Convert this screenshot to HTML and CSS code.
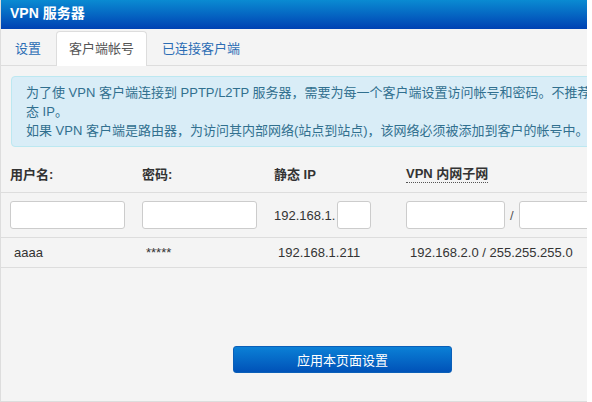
FILE: index.html
```html
<!DOCTYPE html>
<html lang="zh-CN">
<head>
    <meta charset="UTF-8">
    <title>VPN 服务器</title>
    <link rel="stylesheet" href="styles.css">
</head>
<body>
<section class="panel">
    <div class="inner">
        <div class="hd">VPN 服务器</div>
        <ul class="tabs">
            <li><a href="javascript:;">设置</a></li>
            <li class="active"><a href="javascript:;">客户端帐号</a></li>
            <li><a href="javascript:;">已连接客户端</a></li>
        </ul>
        <div class="alert">
            为了使 VPN 客户端连接到 PPTP/L2TP 服务器，需要为每一个客户端设置访问帐号和密码。不推荐使用静<br>
            态 IP。<br>
            如果 VPN 客户端是路由器，为访问其内部网络(站点到站点)，该网络必须被添加到客户的帐号中。
        </div>
        <div class="grid">
            <div class="row head">
                <div class="cell">用户名:</div>
                <div class="cell">密码:</div>
                <div class="cell">静态 IP</div>
                <div class="cell"><span class="tip">VPN 内网子网</span></div>
            </div>
            <div class="row form">
                <div class="cell"><input type="text" class="ipt"></div>
                <div class="cell"><input type="password" class="ipt"></div>
                <div class="cell">192.168.1.<input type="text" class="ipt small"></div>
                <div class="cell"><input type="text" class="ipt net"><span class="sep">/</span><input type="text" class="ipt net"></div>
            </div>
            <div class="row data">
                <div class="cell">aaaa</div>
                <div class="cell">*****</div>
                <div class="cell">192.168.1.211</div>
                <div class="cell">192.168.2.0 / 255.255.255.0</div>
            </div>
        </div>
        <div class="actions">
            <button class="btn">应用本页面设置</button>
        </div>
    </div>
</section>
</body>
</html>
```

FILE: styles.css
```css
html,body{ height:100%; }
body,ul{ margin:0; padding:0; }
body{
    background:#fff;
    font-family:"Liberation Sans","Noto Sans CJK SC",sans-serif;
    font-size:13px;
    color:#333;
}
.panel{
    width:587px;
    height:402px;
    box-sizing:border-box;
    border-left:1px solid #ddd;
    border-bottom:1px solid #ddd;
    background:#f4f4f4;
    overflow:hidden;
}
.panel .inner{ width:685px; margin-left:-1px; }
.hd{
    height:29px;
    line-height:27px;
    padding-left:10px;
    background:linear-gradient(#0a8bd2,#0041b3);
    color:#fff;
    font-size:14px;
    font-weight:bold;
}
.tabs{
    list-style:none;
    display:flex;
    align-items:flex-start;
    height:34px;
    padding:2px 0 0 2px;
    border-bottom:1px solid #ddd;
}
.tabs li{
    height:33px;
    margin-right:2px;
    border:1px solid transparent;
    border-bottom:none;
    border-radius:4px 4px 0 0;
}
.tabs li a{
    display:block;
    padding:0 12px;
    line-height:33px;
    color:#2c6db4;
    text-decoration:none;
}
.tabs li.active{
    height:34px;
    background:#fff;
    border-color:#ddd;
}
.tabs li.active a{ color:#555; }
.alert{
    margin:10px 11px 0 11px;
    padding:6px 14px;
    border:1px solid #bce8f1;
    border-radius:4px;
    background:#d9edf7;
    color:#31708f;
    line-height:19px;
    white-space:nowrap;
}
.grid{ margin-top:10px; }
.grid .row{
    display:grid;
    grid-template-columns:132px 132px 132px 1fr;
    padding-left:2px;
    border-bottom:1px solid #ddd;
    line-height:19px;
}
.grid .cell{
    display:flex;
    align-items:center;
    padding:8px;
    white-space:nowrap;
}
.grid .head .cell{ font-weight:bold; }
.grid .tip{
    border-bottom:1px dotted #555;
    line-height:16px;
}
.grid .data .cell{ padding:5px 8px 5px 12px; }
.ipt{
    box-sizing:border-box;
    width:115px;
    height:28px;
    margin:0;
    border:1px solid #ccc;
    border-radius:3px;
    background:#fff;
    font:inherit;
}
.ipt.small{ width:34px; margin-left:2px; }
.ipt.net{ width:99px; flex:none; }
.sep{ margin:0 5px; color:#555; }
.actions{
    margin-top:78px;
    text-align:center;
}
.btn{
    width:219px;
    height:27px;
    border:1px solid #0a5fb8;
    border-radius:3px;
    background:linear-gradient(#0b80d6,#0052b8);
    color:#fff;
    font:inherit;
    font-size:13px;
}
```
